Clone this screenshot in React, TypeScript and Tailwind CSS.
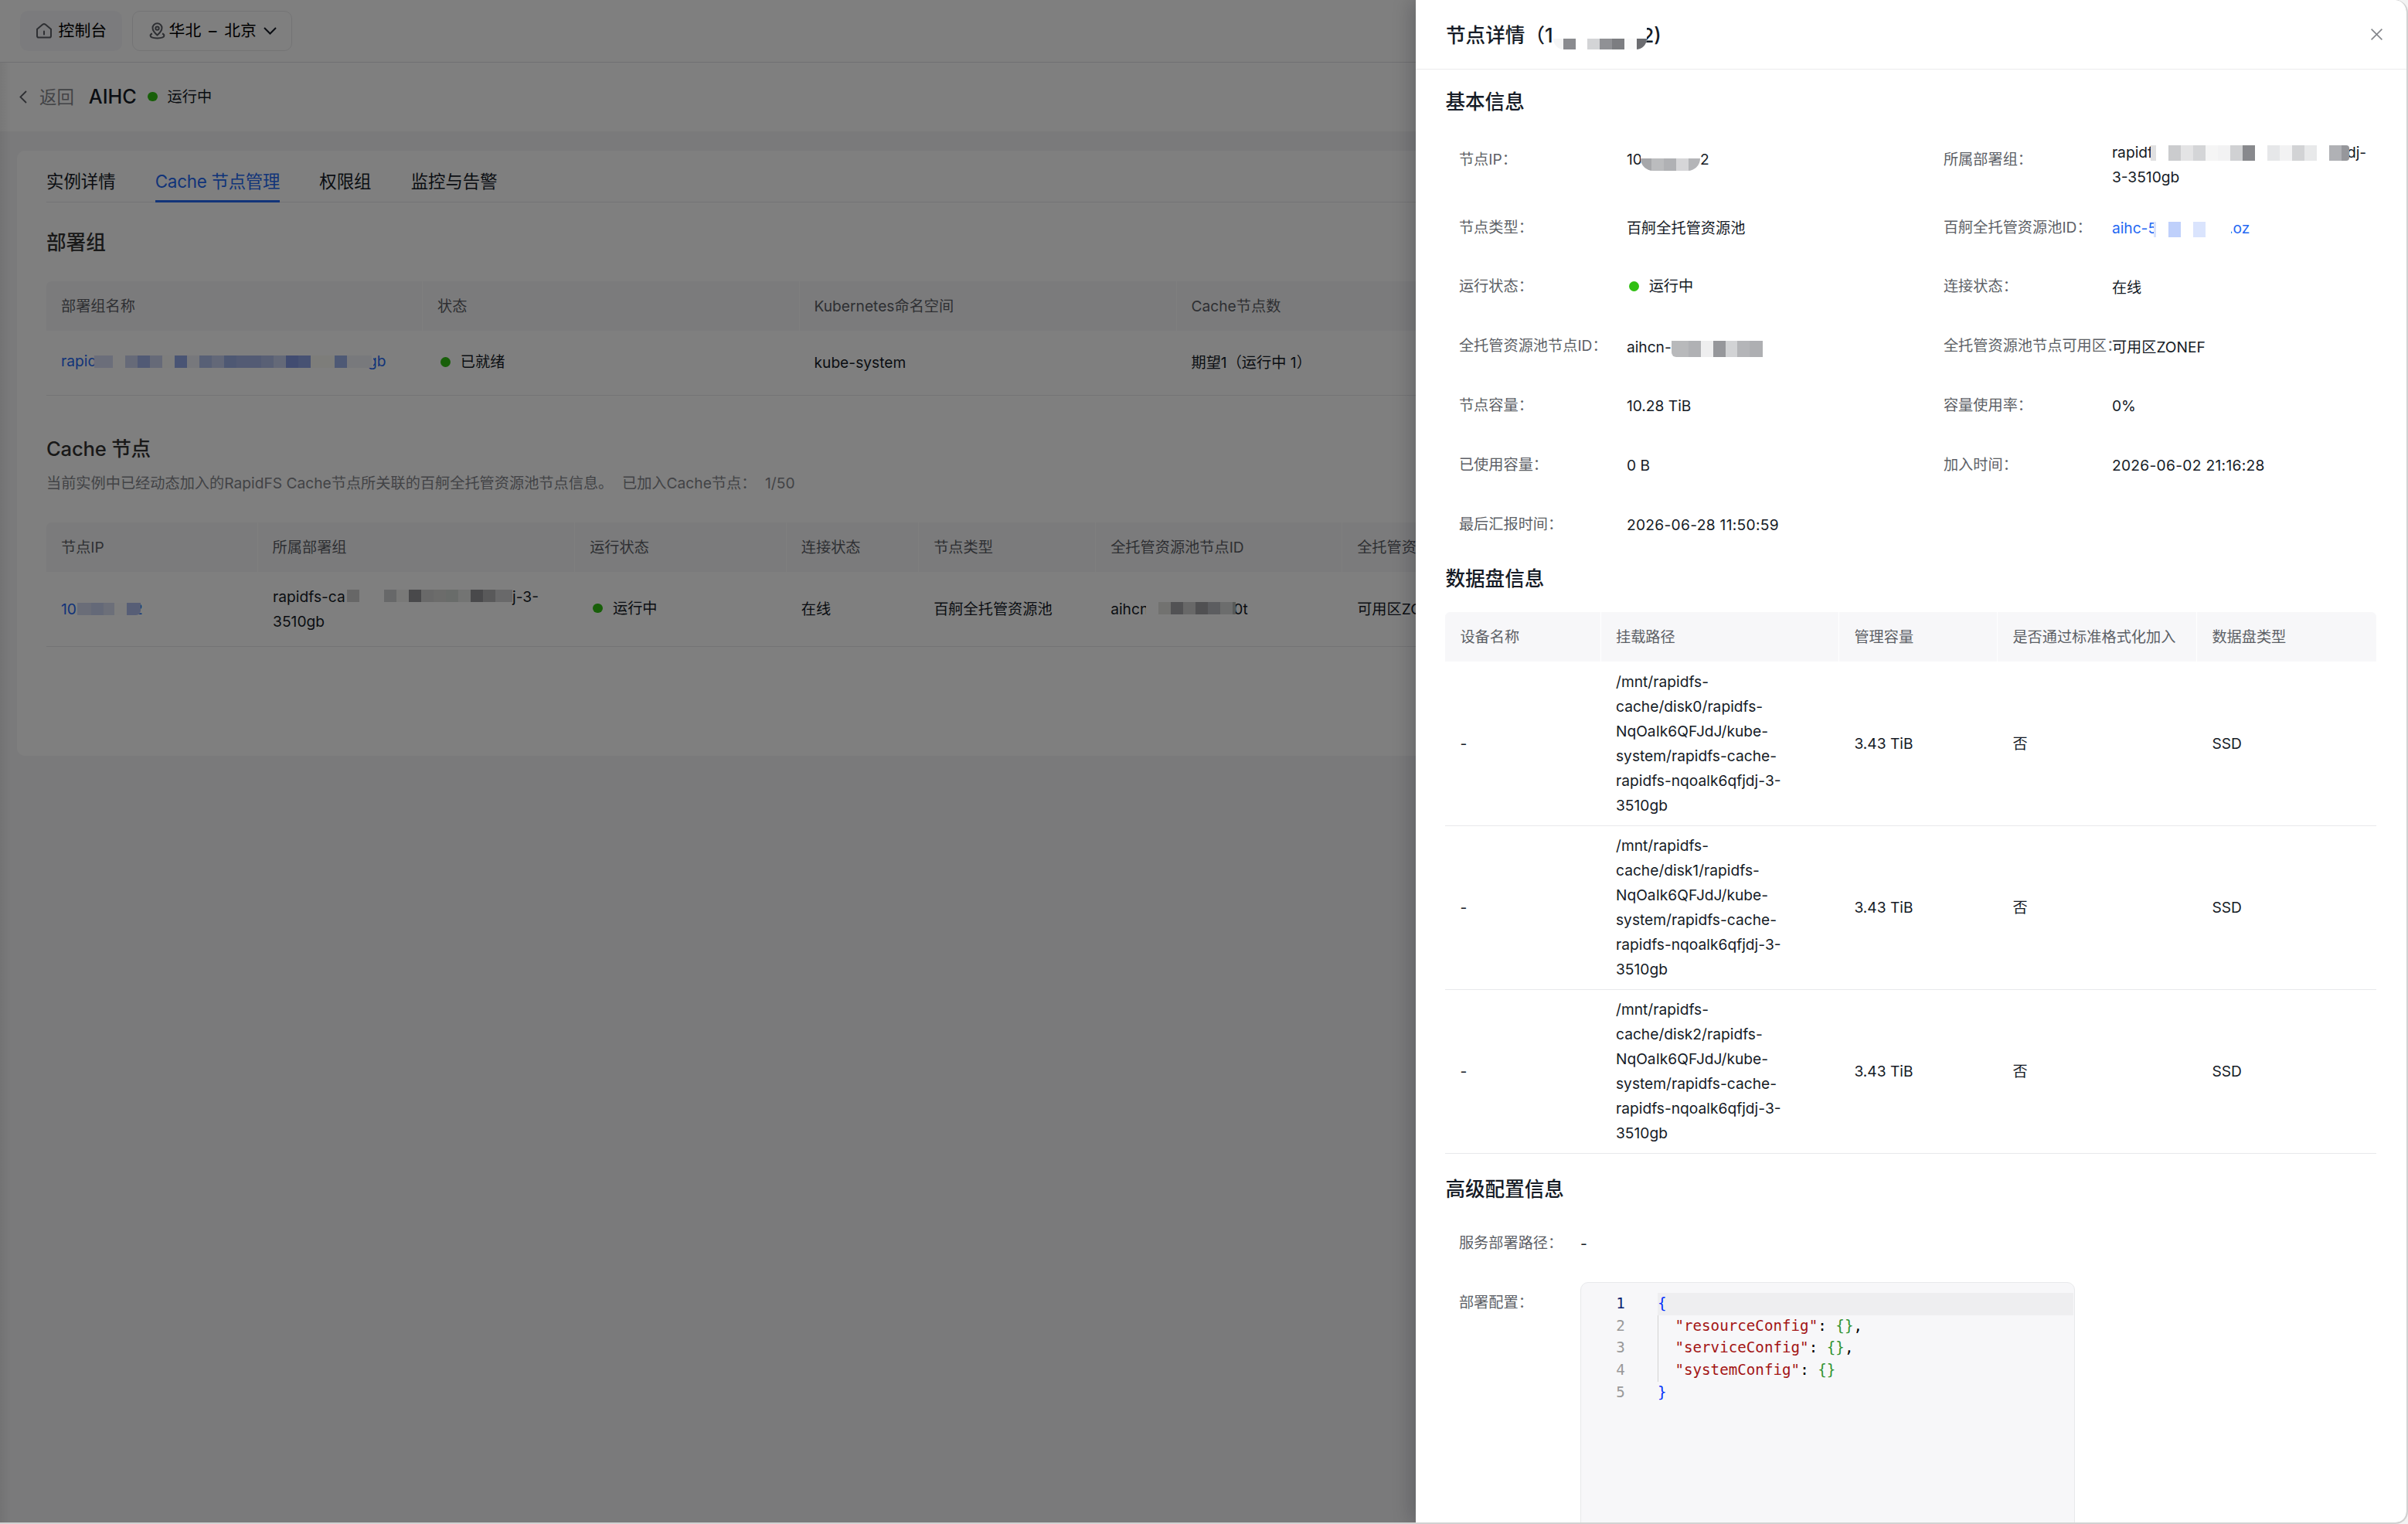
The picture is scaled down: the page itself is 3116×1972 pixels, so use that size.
import type { ReactNode } from "react";

const FONT = "font-['Inter','Noto_Sans_CJK_SC',sans-serif]";

type Block = [width: number, color: string];

/** Pixelated strip that hides a sensitive part of an identifier. */
function Mosaic({
  blocks,
  className = "",
  blockHeight = 16,
}: {
  blocks: Block[];
  className?: string;
  blockHeight?: number;
}) {
  return (
    <span className={`relative flex shrink-0 items-end overflow-hidden bg-white ${className}`}>
      {blocks.map(([width, color], i) => (
        <span key={i} className="shrink-0" style={{ width, height: blockHeight, backgroundColor: color }} />
      ))}
    </span>
  );
}

function Status({ label, className = "" }: { label: string; className?: string }) {
  return (
    <span className={`flex items-center gap-[13px] ${className}`}>
      <span className="size-[12.8px] shrink-0 rounded-full bg-[#30bf13]" />
      {label}
    </span>
  );
}

function HomeIcon() {
  return (
    <svg className="size-[22px]" viewBox="0 0 22 22" fill="none" stroke="#5c5f66" strokeWidth="2" strokeLinejoin="round">
      <path d="M2 8.8 L9.4 2.6 Q11 1.4 12.6 2.6 L20 8.8 V17.5 Q20 19.6 18 19.6 H4 Q2 19.6 2 17.5 Z" />
      <path d="M11 11.5 V15.5" strokeLinecap="round" />
    </svg>
  );
}

function PinIcon() {
  return (
    <svg className="h-[22px] w-[21px]" viewBox="0 0 21 22" fill="none" stroke="#5c5f66" strokeWidth="2">
      <path d="M10.5 16.5 C6.5 13 4.5 10.5 4.5 7.3 A6 6 0 0 1 16.5 7.3 C16.5 10.5 14.5 13 10.5 16.5 Z" />
      <circle cx="10.5" cy="7.6" r="2.2" />
      <path d="M4 14.5 C2.5 15 1.6 15.8 1.6 17 C1.6 19.2 5 20.4 10.5 20.4 C16 20.4 19.4 19.2 19.4 17 C19.4 15.8 18.5 15 17 14.5" />
    </svg>
  );
}

function TopBar() {
  return (
    <header className="flex h-[81px] shrink-0 items-start gap-[13px] border-b border-[#e0e1e4] bg-white pl-[25.6px] pt-[14px] text-[20.8px] text-black">
      <div className="flex h-[52px] w-[132px] items-center rounded-[10px] bg-[#f7f7fa] pl-[20px]">
        <HomeIcon />
        <span className="ml-[8px]">控制台</span>
      </div>
      <div className="flex h-[52px] w-[207px] items-center rounded-[10px] border-[1.6px] border-[#e8e9eb] pl-[21px]">
        <PinIcon />
        <span className="ml-[5px] whitespace-pre [word-spacing:4px]">华北 – 北京</span>
        <svg className="ml-[9px] h-[10px] w-[17px]" viewBox="0 0 17 10" fill="none" stroke="#151b26" strokeWidth="2">
          <path d="M1 1 L8.5 8.5 L16 1" />
        </svg>
      </div>
    </header>
  );
}

function TitleBar() {
  return (
    <div className="flex h-[89px] shrink-0 items-center bg-white pl-[25px] text-[#151b26]">
      <svg className="h-[17px] w-[10px]" viewBox="0 0 10 17" fill="none" stroke="#5c5f66" strokeWidth="1.8">
        <path d="M9 1 L1.4 8.5 L9 16" />
      </svg>
      <span className="ml-[16px] text-[22.4px] text-[#84868c]">返回</span>
      <span className="ml-[19px] text-[25.2px] font-medium">AIHC</span>
      <Status label="运行中" className="ml-[14px] pb-[1px] text-[19.2px]" />
    </div>
  );
}

const TABS = ["实例详情", "Cache 节点管理", "权限组", "监控与告警"];

function Tabs() {
  return (
    <nav className="flex h-[67px] gap-[51.2px] border-b-[1.6px] border-[#e8e9eb] text-[22.4px] text-[#151b26]">
      {TABS.map((tab, i) => (
        <span
          key={tab}
          className={
            i === 1
              ? "-mb-[1.6px] h-[67px] border-b-[3.2px] border-[#2468f2] pt-[22px] leading-[36px] tracking-[-0.25px] text-[#2468f2]"
              : "pt-[22px] leading-[36px]"
          }
        >
          {tab}
        </span>
      ))}
    </nav>
  );
}

function HeadCells({ cells, cols }: { cells: string[]; cols: string }) {
  return (
    <div className={`grid h-[64px] items-stretch overflow-hidden rounded-t-[6.4px] bg-[#f7f7f9] text-[#5c5f66] ${cols}`}>
      {cells.map((cell, i) => (
        <span
          key={cell}
          className={
            i < cells.length - 1
              ? "flex items-center whitespace-nowrap border-r-[1.6px] border-white pl-[19px]"
              : "flex items-center whitespace-nowrap pl-[19px]"
          }
        >
          {cell}
        </span>
      ))}
    </div>
  );
}

const GROUP_COLS = "grid-cols-[487px_487.5px_488px_1fr]";
const NODE_COLS = "grid-cols-[273.6px_410.6px_273.6px_171.4px_229px_319px_1fr]";
const DISK_COLS = "grid-cols-[201.6px_308.4px_205px_258px_1fr]";

function GroupTable() {
  return (
    <div className="mt-[32px] text-[19.2px] text-[#151b26]">
      <HeadCells cols={GROUP_COLS} cells={["部署组名称", "状态", "Kubernetes命名空间", "Cache节点数"]} />
      <div className={`grid h-[84px] items-center border-b-[1.6px] border-[#e8e9eb] ${GROUP_COLS}`}>
        <span className="flex items-center pb-[5px] pl-[19px] text-[#2468f2]">
          <span className="w-[43px] whitespace-nowrap">rapid</span>
          <Mosaic
            className="mt-[2px] h-[16px] w-[361px]"
            blocks={[
              [24, "#d6dcf4"], [16, "#ffffff"], [16, "#ccd4f0"], [16, "#a2b4ea"], [16, "#ccd4f0"], [16, "#fdfdfa"],
              [16, "#92a9e8"], [16, "#eef0f8"], [16, "#b0c0ec"], [16, "#c6d0f0"], [16, "#9cb0e6"], [16, "#a6b6e8"],
              [16, "#a6b6e8"], [16, "#b2c0ea"], [16, "#c8d2f0"], [16, "#8299e2"], [16, "#8fa5e6"], [31, "#fafaf4"],
              [16, "#9cb2ea"], [32, "#f0f2f8"],
            ]}
          />
          <span className="-ml-[7px]">gb</span>
        </span>
        <Status label="已就绪" className="pb-[2px] pl-[23px]" />
        <span className="pl-[19px]">kube-system</span>
        <span className="pl-[19px]">期望1（运行中 1）</span>
      </div>
    </div>
  );
}

function NodeTable() {
  return (
    <div className="mt-[35px] text-[19.2px] text-[#151b26]">
      <HeadCells
        cols={NODE_COLS}
        cells={["节点IP", "所属部署组", "运行状态", "连接状态", "节点类型", "全托管资源池节点ID", "全托管资源池节点可用区"]}
      />
      <div className={`grid h-[97px] items-center border-b-[1.6px] border-[#e8e9eb] ${NODE_COLS}`}>
        <span className="flex items-center pl-[19px] text-[#2468f2]">
          <span>10.</span>
          <Mosaic
            className="-ml-[4px] -mt-[8px] h-[24px] w-[82px] rounded-r-[6px]"
            blocks={[[18, "#d4daf0"], [16, "#c8d2f0"], [14, "#d8def2"], [16, "#fdfdfd"], [20, "#aebcec"]]}
          />
          <span className="-ml-[9px]">2</span>
        </span>
        <span className="flex flex-col pl-[19.5px] leading-[32px]">
          <span className="flex">
            <span className="w-[96px] whitespace-nowrap">rapidfs-ca</span>
            <Mosaic
              className="mt-[-1px] h-[24px] w-[214px] rounded-tr-[8px]"
              blocks={[
                [16, "#cfcfcf"], [32, "#ffffff"], [16, "#cfd0d2"], [16, "#f2f2f0"], [16, "#929397"], [16, "#d2d2d2"],
                [16, "#d8d8d6"], [16, "#d2d8d4"], [16, "#e6e8e6"], [16, "#929397"], [16, "#b2b3b5"], [24, "#d2d3d4"],
              ]}
            />
            <span>j-3-</span>
          </span>
          <span>3510gb</span>
        </span>
        <Status label="运行中" className="pb-[2px] pl-[23px]" />
        <span className="pl-[19px]">在线</span>
        <span className="pl-[19px]">百舸全托管资源池</span>
        <span className="flex items-center pl-[19px]">
          <span className="w-[46px] whitespace-nowrap">aihcn</span>
          <Mosaic
            className="-mt-[9px] h-[24px] w-[116px]"
            blocks={[[16, "#ffffff"], [16, "#e4e4e0"], [16, "#a4a5a8"], [16, "#d0d0d0"], [16, "#a0a1a4"], [16, "#b8bac0"], [16, "#d8dada"], [4, "#b0b4b0"]]}
          />
          <span className="-ml-[3px]">0t</span>
        </span>
        <span className="whitespace-nowrap pl-[19px]">可用区ZONEF</span>
      </div>
    </div>
  );
}

function ConsolePage() {
  return (
    <div className="isolate flex h-[1970px] w-[3114px] flex-col bg-[#f5f5f6]">
      <TopBar />
      <TitleBar />
      <main className="ml-[22px] mt-[25px] h-[783px] w-[3070px] rounded-[10px] bg-white pl-[38px] pr-[38px]">
        <Tabs />
        <h2 className="mt-[34px] text-[25.6px] font-medium leading-[36px] text-[#333333]">部署组</h2>
        <GroupTable />
        <h2 className="mt-[50px] text-[25.6px] font-medium leading-[38px] tracking-[-0.2px] text-[#333333]">Cache 节点</h2>
        <p className="mt-[9px] flex text-[19.2px] leading-[32px] text-[#84868c]">
          <span className="w-[745px] whitespace-nowrap">当前实例中已经动态加入的RapidFS Cache节点所关联的百舸全托管资源池节点信息。</span>
          <span className="w-[185px] whitespace-nowrap">已加入Cache节点：</span>
          <span>1/50</span>
        </p>
        <NodeTable />
      </main>
    </div>
  );
}

function Field({
  label,
  children,
  labelWidth = "w-[217px]",
}: {
  label: string;
  children?: ReactNode;
  labelWidth?: string;
}) {
  return (
    <div className="flex h-[76.8px] items-center">
      <span className={`${labelWidth} shrink-0 whitespace-nowrap pb-[2px] text-[#5c5f66]`}>{label}：</span>
      <span className="flex items-center pt-[1px]">{children}</span>
    </div>
  );
}

function BasicInfo() {
  return (
    <div className="grid grid-cols-[627px_1fr] pl-[17.5px] text-[19.2px] text-[#151b26]">
      <div className="flex flex-col">
        <div className="flex h-[89.6px] pt-[23px] leading-[32px]">
          <span className="w-[217px] shrink-0 text-[#5c5f66]">节点IP：</span>
          <span className="flex">
            <span className="w-[18px] whitespace-nowrap">10</span>
            <Mosaic
              className="h-[31px] w-[77px] rounded-b-[16px]"
              blocks={[[14, "#a6a7aa"], [16, "#bbbcbe"], [16, "#b0b1b4"], [16, "#d6d6d8"], [15, "#b4b5b8"]]}
            />
            <span>2</span>
          </span>
        </div>
        <Field label="节点类型">百舸全托管资源池</Field>
        <Field label="运行状态">
          <Status label="运行中" className="-mt-[4px] pl-[3px]" />
        </Field>
        <Field label="全托管资源池节点ID">
          <span>aihcn-</span>
          <Mosaic
            className="mt-[5px] h-[21px] w-[118px] rounded-bl-[6px]"
            blockHeight={21}
            blocks={[[22, "#b8b9bb"], [16, "#b0b1b4"], [16, "#eeeeef"], [16, "#96979b"], [15, "#d2d3d5"], [16, "#b4b5b8"], [17, "#aeafb2"]]}
          />
        </Field>
        <Field label="节点容量">10.28 TiB</Field>
        <Field label="已使用容量">0 B</Field>
        <Field label="最后汇报时间">
          <span className="tracking-[0.3px]">2026-06-28 11:50:59</span>
        </Field>
      </div>
      <div className="flex flex-col">
        <div className="flex h-[89.6px] leading-[32px]">
          <span className="w-[218px] shrink-0 pt-[23px] text-[#5c5f66]">所属部署组：</span>
          <span className="flex flex-col pt-[14px]">
            <span className="flex">
              <span className="w-[50px] whitespace-nowrap">rapidf</span>
              <Mosaic
                className="mt-[7px] h-[20px] w-[257px] rounded-r-[4px]"
                blockHeight={20}
                blocks={[
                  [7, "#e0e0e1"], [16, "#ffffff"], [16, "#cbccce"], [16, "#e4e4e5"], [16, "#d4d5d7"], [16, "#f5f5f5"],
                  [16, "#f2f2f3"], [16, "#d0d1d3"], [16, "#88898d"], [16, "#ffffff"], [16, "#e6e7e9"], [16, "#f2f2f3"],
                  [16, "#d2d3d5"], [16, "#e8e9ea"], [16, "#ffffff"], [16, "#b0b1b5"], [14, "#96979b"],
                ]}
              />
              <span className="-ml-[3px]">dj-</span>
            </span>
            <span>3-3510gb</span>
          </span>
        </div>
        <Field label="百舸全托管资源池ID" labelWidth="w-[218px]">
          <span className="w-[54px] whitespace-nowrap text-[#2468f2]">aihc-5</span>
          <Mosaic
            className="h-[24px] w-[100px]"
            blockHeight={20}
            blocks={[[3, "#d8e2fc"], [16, "#ffffff"], [16, "#bfd0fb"], [16, "#ffffff"], [16, "#dae4fd"], [33, "#ffffff"]]}
          />
          <span className="-ml-[3px] text-[#2468f2]">.oz</span>
        </Field>
        <Field label="连接状态" labelWidth="w-[218px]">在线</Field>
        <Field label="全托管资源池节点可用区" labelWidth="w-[218px]">可用区ZONEF</Field>
        <Field label="容量使用率" labelWidth="w-[218px]">0%</Field>
        <Field label="加入时间" labelWidth="w-[218px]">
          <span className="tracking-[0.3px]">2026-06-02 21:16:28</span>
        </Field>
      </div>
    </div>
  );
}

function DiskTable() {
  return (
    <div className="mt-[24px] w-[1205px] text-[19.2px] text-[#151b26]">
      <HeadCells cols={DISK_COLS} cells={["设备名称", "挂载路径", "管理容量", "是否通过标准格式化加入", "数据盘类型"]} />
      {[0, 1, 2].map((disk) => (
        <div key={disk} className={`grid h-[212.2px] items-center border-b-[1.6px] border-[#e8e9eb] ${DISK_COLS}`}>
          <span className="pl-[19px]">-</span>
          <span className="whitespace-pre pl-[19px] leading-[32px]">
            {`/mnt/rapidfs-\ncache/disk${disk}/rapidfs-\nNqOaIk6QFJdJ/kube-\nsystem/rapidfs-cache-\nrapidfs-nqoalk6qfjdj-3-\n3510gb`}
          </span>
          <span className="pl-[19px]">3.43 TiB</span>
          <span className="pl-[19px]">否</span>
          <span className="pl-[19px]">SSD</span>
        </div>
      ))}
    </div>
  );
}

function CodeEditor() {
  const entries: [string, string][] = [
    ["resourceConfig", ","],
    ["serviceConfig", ","],
    ["systemConfig", ""],
  ];
  return (
    <div className="mt-[11px] flex h-[400px] w-[640px] rounded-[10px] border border-[#e8e9eb] bg-[#f7f7f9] pr-px pt-[13px] font-['DejaVu_Sans_Mono',monospace] text-[19.2px] leading-[28.8px]">
      <div className="flex w-[99px] flex-col pr-[42px] text-right text-[#999999]">
        <span className="text-[#0b216f]">1</span>
        <span>2</span>
        <span>3</span>
        <span>4</span>
        <span>5</span>
      </div>
      <div className="flex flex-1 flex-col whitespace-pre text-black">
        <span className="bg-[#eeeef0] text-[#0431fa]">{"{"}</span>
        <div className="flex flex-col border-l-[1.6px] border-[#d3d3d3] pl-[21.5px]">
          {entries.map(([key, tail]) => (
            <span key={key}>
              <span className="text-[#a31515]">{`"${key}"`}</span>
              {": "}
              <span className="text-[#319331]">{"{}"}</span>
              {tail}
            </span>
          ))}
        </div>
        <span className="text-[#0431fa]">{"}"}</span>
      </div>
    </div>
  );
}

function Drawer() {
  return (
    <aside className="absolute right-0 top-0 flex h-[1970px] w-[1282px] flex-col overflow-hidden bg-white text-[#151b26] shadow-[-6px_0_24px_rgba(7,12,20,0.2)]">
      <div className="flex h-[90px] shrink-0 items-center justify-between border-b-[1.6px] border-[#ebebed] pl-[39px] pr-[31px]">
        <h1 className="flex items-center pt-[2px] text-[25.6px] font-medium leading-[38px]">
          节点详情（1
          <Mosaic
            className="mt-[9px] h-[28px] w-[121px] rounded-b-[14px]"
            blockHeight={14}
            blocks={[[13, "#f5f5f5"], [16, "#8a8b8f"], [15, "#ffffff"], [16, "#d3d4d6"], [16, "#909195"], [16, "#7c7d81"], [16, "#fafafa"], [13, "#6b6c70"]]}
          />
          <span className="-ml-[6px]">2)</span>
        </h1>
        <svg className="size-[15px]" viewBox="0 0 15 15" fill="none" stroke="#84868c" strokeWidth="1.6">
          <path d="M0.6 0.6 L14.4 14.4 M14.4 0.6 L0.6 14.4" />
        </svg>
      </div>
      <div className="flex flex-col pl-[38.4px]">
        <h2 className="mt-[23px] h-[54px] text-[25.6px] font-medium leading-[38px]">基本信息</h2>
        <BasicInfo />
        <h2 className="mt-[13px] text-[25.6px] font-medium leading-[38px]">数据盘信息</h2>
        <DiskTable />
        <h2 className="mt-[27px] text-[25.6px] font-medium leading-[38px]">高级配置信息</h2>
        <div className="mt-[13px] pl-[17.5px] text-[19.2px]">
          <Field label="服务部署路径" labelWidth="w-[157px]">-</Field>
          <div className="flex">
            <span className="w-[157px] shrink-0 pt-[21px] leading-[32px] text-[#5c5f66]">部署配置：</span>
            <CodeEditor />
          </div>
        </div>
      </div>
    </aside>
  );
}

export default function App() {
  return (
    <div className="h-[1972px] w-[3116px] overflow-hidden bg-[#f3f3f3]">
      <div className={`relative h-[1972px] w-[3116px] overflow-hidden rounded-r-[16px] border-b-2 border-r-2 border-[#d2d2d2] bg-white ${FONT}`}>
        <ConsolePage />
        <div className="absolute inset-0 bg-black/50" />
        <div className="absolute bottom-0 left-0 top-[81px] w-[14px] bg-linear-to-r from-black/6 to-transparent" />
        <Drawer />
      </div>
    </div>
  );
}
